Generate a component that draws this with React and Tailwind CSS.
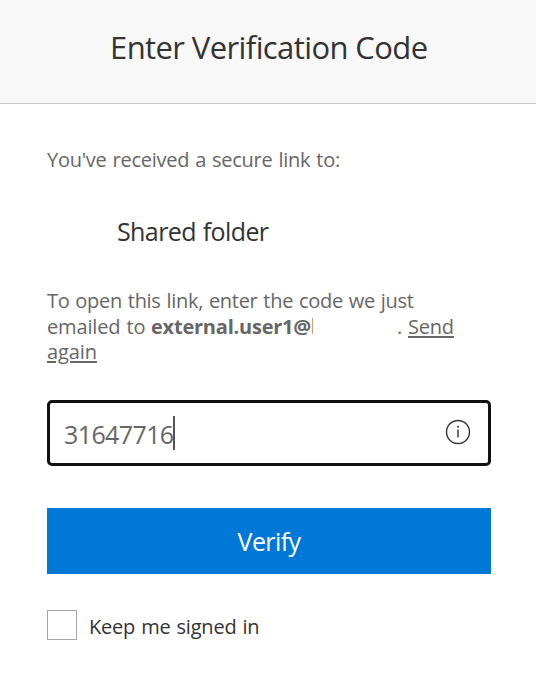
export default function App() {
  return (
    <main className="flex h-[680px] w-[536px] flex-col overflow-hidden bg-white font-['Open_Sans','Noto_Sans',sans-serif] text-[20px] font-[370] text-[#666666]">
      <header className="h-[104px] border-b border-[#c8c8c8] bg-[#f8f8f8] pt-[27px] pl-[110px]">
        <h1 className="text-[31px] leading-[40px] font-[370] tracking-[-0.6px] whitespace-nowrap text-[#333333]">Enter Verification Code</h1>
      </header>
      <section className="flex flex-col pl-[47px]">
        <p className="mt-[43px] leading-[26px] tracking-[-0.25px] [word-spacing:1px] whitespace-nowrap">You've received a secure link to:</p>
        <h2 className="mt-[42px] pl-[70px] text-[25px] leading-[32px] font-[370] tracking-[-0.6px] [word-spacing:1px] text-[#333333]">Shared folder</h2>
        <div className="mt-[41px] text-[20px] leading-[26px] whitespace-nowrap">
          <p className="tracking-[-0.3px] [word-spacing:1px]">To open this link, enter the code we just</p>
          <p className="flex h-[25px]">
            <span className="w-[104px] tracking-[-0.15px] [word-spacing:1px]">emailed to</span>
            <strong className="w-[161px] tracking-[-0.22px] font-bold">external.user1@</strong>
            <span className="mt-[4px] h-[16px] w-px bg-[#d4a06a]" />
            <span className="ml-[84px] w-[11px]">.</span>
            <a href="#send" className="tracking-[-0.2px] underline decoration-2 underline-offset-[2px]">Send</a>
          </p>
          <a href="#send" className="block tracking-[-0.1px] underline decoration-2 underline-offset-[2px]">again</a>
        </div>
        <div className="mt-[35px] flex h-[66px] w-[444px] items-center rounded-[5px] border-[3px] border-[#111111] pr-[17px] pl-[14px]">
          <span className="mt-[2px] text-[25px] leading-[34px] tracking-[-0.6px]">31647716</span>
          <span className="-ml-px h-[34px] w-[2px] bg-[#555555]" />
          <svg className="mb-[3px] ml-auto size-[26px]" viewBox="0 0 26 26" fill="none" stroke="#333333">
            <circle cx="13" cy="13" r="11.5" strokeWidth="1.4" />
            <path d="M13 10.5v8" strokeWidth="1.4" />
            <circle cx="13" cy="7.8" r="1" fill="#333333" stroke="none" />
          </svg>
        </div>
        <button className="mt-[42px] h-[66px] w-[444px] bg-[#0078d7] text-[25px] leading-[32px] font-[370] tracking-[-0.6px] text-white">Verify</button>
        <label className="mt-[36px] flex h-[32px] items-start text-[#333333]">
          <input type="checkbox" className="size-[30px] appearance-none border border-[#a6a6a6] bg-white" />
          <span className="mt-[4px] ml-[12px] leading-[26px] tracking-[-0.2px] [word-spacing:1px]">Keep me signed in</span>
        </label>
      </section>
    </main>
  );
}
